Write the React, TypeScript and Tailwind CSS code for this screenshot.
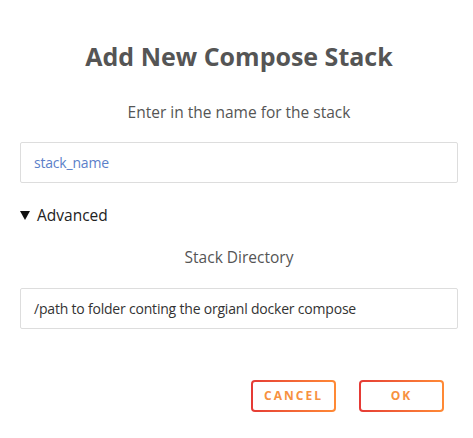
import React from 'react'

const App = () => {
  return (
    <div className="w-[473px] h-[438px] bg-white pl-5 pr-[15px] pt-[38px] font-['Open_Sans',sans-serif]">
      <h1 className="text-center text-[25px] font-bold text-[#555555] leading-[36px]">
        Add New Compose Stack
      </h1>
      <p className="text-center text-[15.5px] text-[#555555] mt-[27px] leading-[22px]">
        Enter in the name for the stack
      </p>
      <div className="mt-[19px] h-[41px] border border-[#dddddd] rounded-[2px] px-[13px] flex items-center">
        <span className="text-[14px] tracking-[-0.2px] text-[#5b7fc9]">stack_name</span>
      </div>

      {/* Advanced */}
      <div className="mt-[20px] flex items-center gap-[7px] text-[15.5px] leading-[24px] text-[#222222]">
        <svg width="10" height="9" viewBox="0 0 10 9" className="mt-[1px]">
          <path d="M0 0 L10 0 L5 9 Z" fill="#111111" />
        </svg>
        <span>Advanced</span>
      </div>
      <p className="text-center text-[15.5px] text-[#555555] mt-[19px] leading-[22px]">
        Stack Directory
      </p>
      <div className="mt-[20px] h-[41px] border border-[#dddddd] rounded-[2px] px-[13px] flex items-center">
        <span className="text-[14px] tracking-[-0.2px] text-[#333333]">
          /path to folder conting the orgianl docker compose
        </span>
      </div>

      <div className="mt-[51px] flex justify-end gap-[23px] pr-[14px]">
        {['CANCEL', 'OK'].map((label) => (
          <button
            key={label}
            className="w-[85px] h-[32px] rounded-[4px] p-[2px] bg-gradient-to-r from-[#e53935] to-[#ff8a35]"
          >
            <span className="w-full h-full bg-white rounded-[2px] flex items-center justify-center text-[12px] font-bold tracking-[2px] text-[#f7913f]">
              {label}
            </span>
          </button>
        ))}
      </div>
    </div>
  )
}

export default App
